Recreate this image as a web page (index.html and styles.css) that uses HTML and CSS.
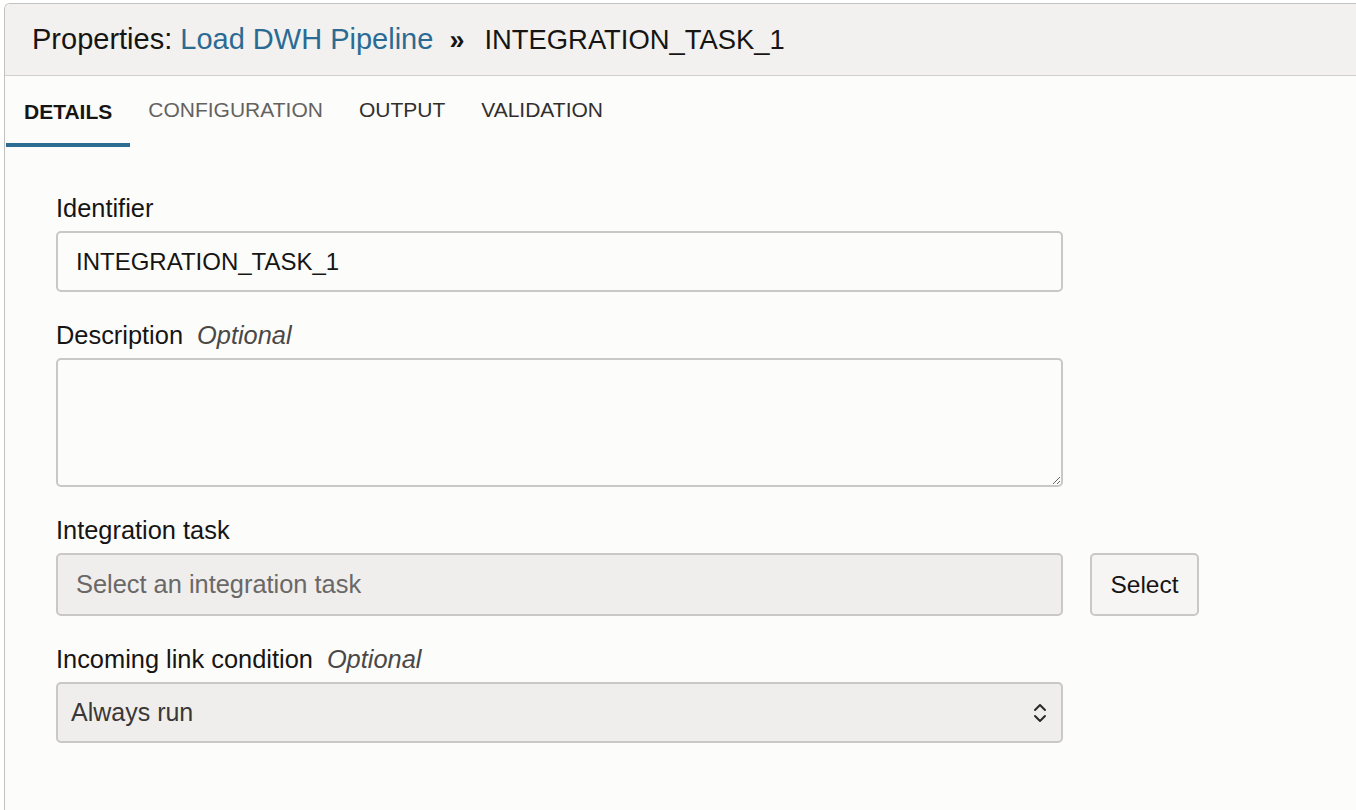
FILE: index.html
```html
<!DOCTYPE html>
<html lang="en">
<head>
<meta charset="utf-8">
<title>Properties</title>
<link rel="stylesheet" href="styles.css">
</head>
<body>
<div class="panel">
  <div class="header">
    <span class="title">Properties: <a class="crumb-link" href="#">Load DWH Pipeline</a><span class="sep">»</span><span class="current">INTEGRATION_TASK_1</span></span>
  </div>
  <div class="tabs">
    <div class="tab active">DETAILS</div>
    <div class="tab muted">CONFIGURATION</div>
    <div class="tab">OUTPUT</div>
    <div class="tab">VALIDATION</div>
  </div>
  <div class="form">
    <div class="field">
      <label class="label">Identifier</label>
      <input class="input" type="text" value="INTEGRATION_TASK_1">
    </div>
    <div class="field">
      <label class="label">Description<span class="optional">Optional</span></label>
      <textarea class="textarea"></textarea>
    </div>
    <div class="field">
      <label class="label">Integration task</label>
      <div class="row">
        <input class="input readonly" type="text" placeholder="Select an integration task" readonly>
        <button class="btn">Select</button>
      </div>
    </div>
    <div class="field">
      <label class="label">Incoming link condition<span class="optional">Optional</span></label>
      <div class="select">
        <span>Always run</span>
        <svg class="chev" width="16" height="24" viewBox="0 0 16 24"><path d="M3 9 L8 4 L13 9" fill="none" stroke="#2b2a28" stroke-width="2" stroke-linecap="round" stroke-linejoin="round"/><path d="M3 15 L8 20 L13 15" fill="none" stroke="#2b2a28" stroke-width="2" stroke-linecap="round" stroke-linejoin="round"/></svg>
      </div>
    </div>
  </div>
</div>
</body>
</html>
```
FILE: styles.css
```css
html, body {
  margin: 0;
  padding: 0;
  background: #ffffff;
}
body {
  font-family: "Liberation Sans", Arial, sans-serif;
  color: #161513;
}
.panel {
  margin: 3px 0 0 4px;
  border-top: 1px solid #c4c2bf;
  border-left: 1px solid #c4c2bf;
  border-top-left-radius: 6px;
  background: #fcfcfb;
  min-height: calc(100vh - 4px);
  overflow: hidden;
}
.header {
  height: 71px;
  background: #f2f1ef;
  border-bottom: 1px solid #d0cfce;
  display: flex;
  align-items: center;
  padding-left: 27px;
}
.title {
  font-size: 29px;
  color: #161513;
  white-space: nowrap;
}
.crumb-link {
  color: #2b6b93;
  text-decoration: none;
}
.sep {
  font-weight: bold;
  margin: 0 20px 0 16px;
  font-size: 27px;
}
.current {
  font-size: 27.4px;
}
.tabs {
  display: flex;
  height: 71px;
  margin-left: 1px;
}
.tab {
  display: flex;
  align-items: center;
  padding: 0 18px;
  font-size: 21px;
  color: #312f2d;
  border-bottom: 4px solid transparent;
  white-space: nowrap;
}
.tab.active {
  font-weight: bold;
  color: #161513;
  border-bottom-color: #2e6d93;
  padding-top: 4px;
}
.tab.muted {
  color: #64625f;
}
.form {
  padding: 49px 0 0 51px;
}
.field {
  margin-bottom: 31px;
}
.label {
  display: block;
  font-size: 25.4px;
  line-height: 24px;
  margin-bottom: 11px;
  color: #161513;
}
.optional {
  font-style: italic;
  color: #4a4846;
  margin-left: 14px;
}
.input {
  box-sizing: border-box;
  width: 1007px;
  height: 61px;
  border: 2px solid #cac8c5;
  border-radius: 5px;
  background: #fcfcfb;
  padding: 0 18px;
  font-family: "Liberation Sans", Arial, sans-serif;
  font-size: 24px;
  color: #161513;
  outline: none;
  display: block;
}
.input.readonly {
  background: #efeeed;
  height: 63px;
  font-size: 25.4px;
}
.input.readonly::placeholder {
  color: #6a6866;
}
.textarea {
  box-sizing: border-box;
  width: 1007px;
  height: 129px;
  border: 2px solid #cac8c5;
  border-radius: 5px;
  background: #fcfcfb;
  display: block;
  resize: both;
  font-family: "Liberation Sans", Arial, sans-serif;
  font-size: 24px;
  outline: none;
}
.row {
  display: flex;
  gap: 27px;
  align-items: center;
}
.btn {
  box-sizing: border-box;
  width: 109px;
  height: 63px;
  border: 2px solid #cac8c5;
  border-radius: 5px;
  background: #f6f5f4;
  font-family: "Liberation Sans", Arial, sans-serif;
  font-size: 24.5px;
  color: #161513;
  padding: 0;
}
.select {
  box-sizing: border-box;
  width: 1007px;
  height: 61px;
  border: 2px solid #cac8c5;
  border-radius: 5px;
  background: #efeeed;
  display: flex;
  align-items: center;
  justify-content: space-between;
  padding: 0 13px 0 13px;
  font-size: 25px;
  color: #3a3836;
}
.chev {
  display: block;
}
```
